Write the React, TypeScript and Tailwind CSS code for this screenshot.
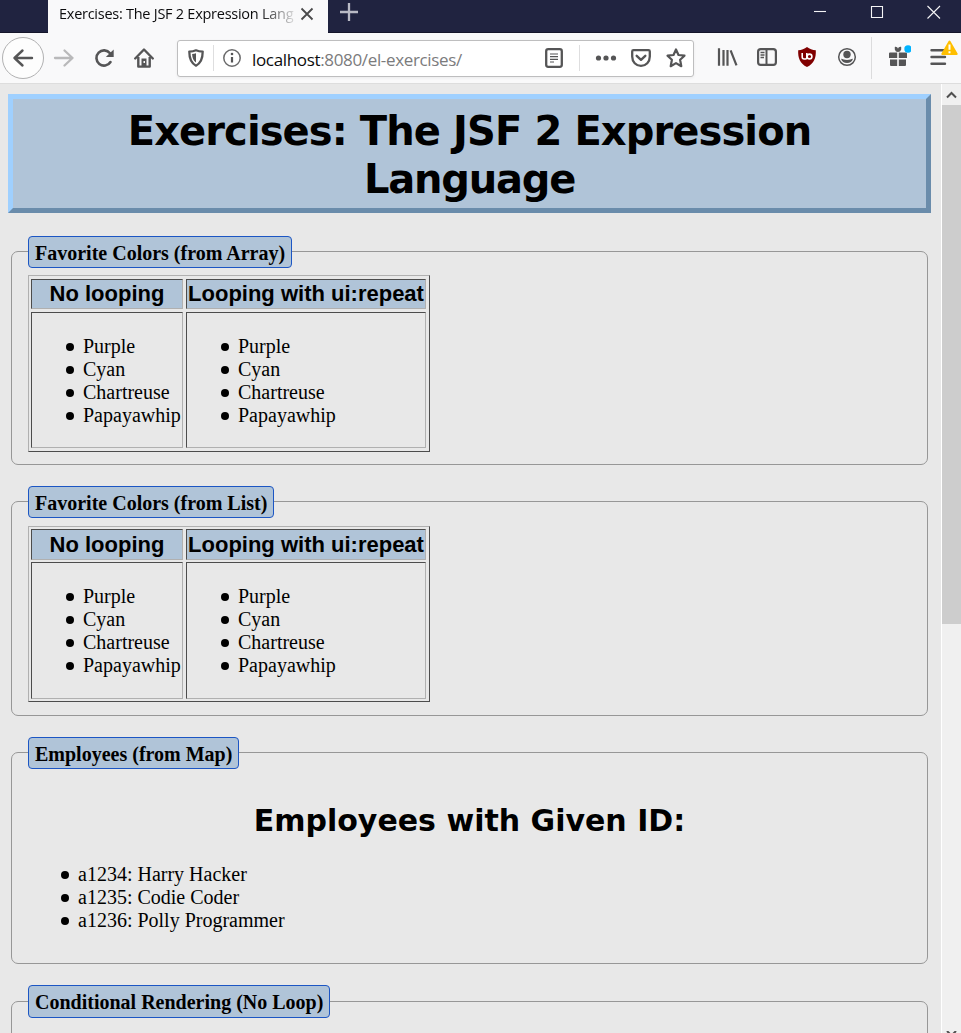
import type { ReactNode } from "react";

function Icon({ children, className = "" }: { children: ReactNode; className?: string }) {
  return (
    <svg width="24" height="24" viewBox="0 0 24 24" fill="none" className={`shrink-0 text-[#555556] ${className}`}>
      {children}
    </svg>
  );
}

function ToolButton({ children }: { children: ReactNode }) {
  return <div className="flex h-10 w-10 shrink-0 items-center justify-center">{children}</div>;
}

function TabStrip() {
  return (
    <div className="flex h-[33px] shrink-0 border-b border-[#14152a] bg-[#202340]">
      <div className="ml-12 flex h-[33px] w-[280px] shrink-0 items-center bg-[#f9f9fa] pb-[5px] pl-[11px]">
        <span className="w-[236px] overflow-hidden whitespace-nowrap bg-linear-to-r from-[#0c0c0d] from-85% to-[#0c0c0d]/10 bg-clip-text font-['Open_Sans',sans-serif] text-[14.5px] leading-5 tracking-[-0.26px] text-transparent">
          Exercises: The JSF 2 Expression Lang
        </span>
        <svg width="14" height="14" viewBox="0 0 14 14" className="ml-[5px]" stroke="#4a4a4b" strokeWidth="1.8" fill="none">
          <path d="M1.500 1.500L12.500 12.500M12.500 1.500L1.500 12.500" />
        </svg>
      </div>
      <svg width="20" height="20" viewBox="0 0 20 20" className="ml-[11px] mt-[2px]" stroke="#b9bac5" strokeWidth="2.300" fill="none">
        <path d="M1 10H19M10 1V19" />
      </svg>
      <div className="flex-1" />
      <svg width="130" height="24" viewBox="0 0 130 24" stroke="#f4f4f6" strokeWidth="1.1" fill="none" className="mr-[18px]">
        <path d="M1 11.500H13" />
        <path d="M58.500 6.500H69.500V17.500H58.500Z" />
        <path d="M114.500 6L127 18.500M127 6L114.500 18.500" />
      </svg>
    </div>
  );
}

function AddressBar() {
  return (
    <div className="flex h-[37px] w-[517px] shrink-0 items-center rounded-[3px] border border-[#bebebf] bg-white shadow-[0_1px_3px_rgba(0,0,0,0.06)]">
      <Icon className="ml-[6px]">
        <path d="M12 4.300C14 5.200 16.500 5.600 18.700 5.600C18.700 12.500 17.500 17 12 19.700C6.500 17 5.300 12.500 5.300 5.600C7.500 5.600 10 5.200 12 4.300Z" stroke="currentColor" strokeWidth="2.300" strokeLinejoin="round" />
        <path d="M12 7.300V16.600C9.300 14.800 8.300 12 8.100 8.100C9.600 8 10.900 7.700 12 7.300Z" fill="currentColor" />
      </Icon>
      <div className="ml-[5px] h-[26px] w-px bg-[#dededf]" />
      <Icon className="ml-[6px]">
        <circle cx="12" cy="12" r="8.200" stroke="#6b6b6c" strokeWidth="1.500" />
        <path d="M12 11V16.500" stroke="currentColor" strokeWidth="2.200" />
        <circle cx="12" cy="8" r="1.300" fill="currentColor" />
      </Icon>
      <div className="ml-[8px] mt-[3px] w-[285px] whitespace-nowrap font-['Open_Sans',sans-serif] text-[17px] leading-6 tracking-[-0.34px] text-[#7b7b7c]">
        <span className="text-[#0c0c0d]">localhost</span>:8080/el-exercises/
      </div>
      <Icon className="ml-[5px]">
        <rect x="4.200" y="3.200" width="15.600" height="17.600" rx="2" stroke="currentColor" strokeWidth="2.300" />
        <path d="M8 8H16M8 10.700H16M8 13.300H16M8 16H12" stroke="currentColor" strokeWidth="1.200" />
      </Icon>
      <div className="ml-[13px] h-[26px] w-px bg-[#dededf]" />
      <Icon className="ml-[14px]">
        <circle cx="4.500" cy="12" r="2.600" fill="currentColor" />
        <circle cx="12" cy="12" r="2.600" fill="currentColor" />
        <circle cx="19.500" cy="12" r="2.600" fill="currentColor" />
      </Icon>
      <Icon className="ml-[11px]">
        <path d="M4.500 4.200H19.500Q20.800 4.200 20.800 5.500V10.500C20.800 16 17 19.800 12 19.800S3.200 16 3.200 10.500V5.500Q3.200 4.200 4.500 4.200Z" stroke="currentColor" strokeWidth="2.300" />
        <path d="M7.700 9.800L12 13.800L16.300 9.800" stroke="currentColor" strokeWidth="2.400" strokeLinecap="round" strokeLinejoin="round" />
      </Icon>
      <Icon className="ml-[11px]">
        <path d="M12 3.500L14.500 9L20.500 9.700L16.100 13.800L17.300 20.200L12 17.100L6.700 20.200L7.900 13.800L3.500 9.700L9.500 9Z" stroke="currentColor" strokeWidth="2.200" strokeLinejoin="round" />
      </Icon>
    </div>
  );
}

function Toolbar() {
  return (
    <div className="flex h-[51px] shrink-0 items-center border-b border-[#dddddd] bg-[#f9f9fa]">
      <div className="ml-[2px] flex h-[42px] w-[42px] shrink-0 items-center justify-center rounded-full border border-[#b1b1b2] bg-[#fdfdfd]">
        <Icon>
          <path d="M21 12H3.500M11.500 4.500L3.500 12L11.500 19.500" stroke="currentColor" strokeWidth="2.400" strokeLinecap="round" strokeLinejoin="round" />
        </Icon>
      </div>
      <ToolButton>
        <Icon>
          <path d="M3 12H20.500M12.500 4.500L20.500 12L12.500 19.500" stroke="#b9b9ba" strokeWidth="2.300" strokeLinecap="round" strokeLinejoin="round" />
        </Icon>
      </ToolButton>
      <ToolButton>
        <Icon>
          <path d="M18.500 16A7.600 7.600 0 1 1 18 7.300" stroke="currentColor" strokeWidth="2.600" strokeLinecap="round" />
          <path d="M21.700 3.500V11H13.800Z" fill="currentColor" />
        </Icon>
      </ToolButton>
      <ToolButton>
        <Icon>
          <path d="M3.200 12.500L12 3.500L20.800 12.500" stroke="currentColor" strokeWidth="2.400" strokeLinecap="round" strokeLinejoin="round" />
          <path d="M6.300 11V20.600H17.700V11" stroke="currentColor" strokeWidth="2.400" strokeLinejoin="round" />
          <path d="M9.500 12.500H14.500V20.500H9.500Z" fill="currentColor" />
          <path d="M11.500 15H13V17H11.500Z" fill="#f9f9fa" />
        </Icon>
      </ToolButton>
      <div className="ml-[13px]">
        <AddressBar />
      </div>
      <div className="ml-[13px] flex">
        <ToolButton>
          <Icon>
            <path d="M4 3.300V20.700M8.500 5V20.700M12.500 5V20.700M15.600 5.300L21.500 20.300" stroke="currentColor" strokeWidth="2.200" />
          </Icon>
        </ToolButton>
        <ToolButton>
          <Icon>
            <rect x="3.100" y="4.100" width="17.800" height="15.800" rx="2.600" stroke="currentColor" strokeWidth="2.200" />
            <path d="M11.500 4V20" stroke="currentColor" strokeWidth="2" />
            <path d="M5.500 7.500H9.500M5.500 10H9.500M5.500 12.500H9" stroke="currentColor" strokeWidth="1.300" />
          </Icon>
        </ToolButton>
        <ToolButton>
          <Icon>
            <path d="M12 2C14.500 4 17.500 5 20.800 5.200C21.200 13 19 18.500 12 22C5 18.500 2.800 13 3.200 5.200C6.500 5 9.500 4 12 2Z" fill="#800000" />
            <path d="M7.200 8V12Q7.200 14 9.200 14H10.600Q11.800 14 11.800 12.500V8" stroke="#fff" strokeWidth="1.600" />
            <circle cx="14.500" cy="11.500" r="2.400" stroke="#fff" strokeWidth="1.600" />
          </Icon>
        </ToolButton>
        <ToolButton>
          <Icon>
            <circle cx="12" cy="12" r="8.300" stroke="currentColor" strokeWidth="1.500" />
            <circle cx="12" cy="9.500" r="3.700" fill="currentColor" />
            <path d="M6 13.800C8 14 9.200 15 12 15S16 14 18 13.800C17 16.800 15 18 12 18S7 16.800 6 13.800Z" fill="currentColor" />
          </Icon>
        </ToolButton>
        <div className="ml-[4px] h-[42px] w-px bg-[#dcdcdd]" />
        <div className="ml-[6px]">
          <ToolButton>
            <svg width="26" height="26" viewBox="0 0 26 26" fill="#555556">
              <path d="M5 8.500H12.200V14H4V9.500Q4 8.500 5 8.500ZM13.800 8.500H21Q22 8.500 22 9.500V14H13.800ZM5 15.500H12.200V22H6Q5 22 5 21ZM13.800 15.500H21V21Q21 22 20 22H13.800Z" />
              <path d="M9.800 3C11 2.500 12.500 3.200 13 4.800C13.500 3.200 15 2.500 16.200 3V5.500Q15.500 8 13 8T9.800 5.500Z" />
              <circle cx="23" cy="5" r="3.700" fill="#00b3ff" />
            </svg>
          </ToolButton>
        </div>
        <div className="relative">
          <ToolButton>
            <Icon>
              <path d="M5.500 5.200H19M5.500 12H19M5.500 18.800H19" stroke="currentColor" strokeWidth="2.400" strokeLinecap="round" />
            </Icon>
          </ToolButton>
          <svg width="17" height="16" viewBox="0 0 17 16" className="absolute left-[23px] top-[3px]">
            <path d="M8.500 1.500L15.700 14H1.300Z" fill="#ffbf00" stroke="#ffbf00" strokeWidth="2" strokeLinejoin="round" />
            <path d="M8.500 4.500V9.700M8.500 11.300V13.300" stroke="#fff" strokeWidth="2" />
          </svg>
        </div>
      </div>
    </div>
  );
}

function Section({
  title,
  children,
  className = "",
  legendHeight = "h-[31.5px]",
}: {
  title: string;
  children?: ReactNode;
  className?: string;
  legendHeight?: string;
}) {
  return (
    <fieldset className={`ml-[3px] w-[917px] rounded-[7px] border border-[#979797] px-4 ${className}`}>
      <legend className={`rounded-[4px] border border-[#1c56c4] bg-[#b0c4d8] px-[6px] pt-[4px] text-[20px] font-bold leading-[24px] ${legendHeight}`}>
        {title}
      </legend>
      {children}
    </fieldset>
  );
}

const cell = "border border-t-[#4c4c4c] border-l-[#4c4c4c] border-r-[#b0b0b0] border-b-[#b0b0b0]";
const colors = ["Purple", "Cyan", "Chartreuse", "Papayawhip"];

function Bullet({ children }: { children: ReactNode }) {
  return (
    <li className="flex items-center before:mr-[9px] before:size-[8px] before:rounded-full before:bg-black before:content-['']">
      {children}
    </li>
  );
}

function ColorList() {
  return (
    <ul className={`${cell} pl-[34px] pt-[22px]`}>
      {colors.map((c) => (
        <Bullet key={c}>{c}</Bullet>
      ))}
    </ul>
  );
}

function HeaderCell({ children }: { children: ReactNode }) {
  return (
    <div className={`${cell} flex items-center justify-center whitespace-nowrap bg-[#b0c4d8] font-['Liberation_Sans',Arial,sans-serif] text-[22px] font-bold leading-[28px]`}>
      {children}
    </div>
  );
}

function ColorTable({ className }: { className: string }) {
  return (
    <div className={`grid w-[402px] grid-cols-[152px_240px] gap-x-[3px] border border-t-[#b0b0b0] border-l-[#b0b0b0] border-r-[#4c4c4c] border-b-[#4c4c4c] pl-[2px] ${className}`}>
      <HeaderCell>No looping</HeaderCell>
      <HeaderCell>Looping with ui:repeat</HeaderCell>
      <ColorList />
      <ColorList />
    </div>
  );
}

function Scrollbar() {
  return (
    <div className="flex w-5 shrink-0 flex-col border-l border-white bg-[#f0f0f0]">
      <div className="flex h-[21px] items-center justify-center">
        <svg width="11" height="8" viewBox="0 0 11 8" fill="none" stroke="#505050" strokeWidth="2">
          <path d="M1 6.500L5.500 2L10 6.500" />
        </svg>
      </div>
      <div className="h-[519px] bg-[#cdcdcd]" />
      <div className="flex-1" />
      <svg width="11" height="2" viewBox="0 0 11 2" fill="none" stroke="#505050" strokeWidth="2" className="ml-[4px]">
        <path d="M1 0L5.500 4.500L10 0" />
      </svg>
    </div>
  );
}

export default function App() {
  return (
    <div className="flex h-[1033px] w-[961px] flex-col overflow-hidden bg-[#e8e8e8]">
      <TabStrip />
      <Toolbar />
      <div className="flex min-h-0 flex-1">
        <main className="w-[941px] overflow-hidden pl-2 pt-[10px] font-['Liberation_Serif','Times_New_Roman',serif] text-[20px] leading-[23px] text-black">
          <h1 className="h-[119px] w-[923px] border-[5px] border-t-[#9fd0ff] border-l-[#9fd0ff] border-r-[#6a8cab] border-b-[#6a8cab] bg-[#b0c4d8] pt-[8px] text-center font-['DejaVu_Sans',Verdana,sans-serif] text-[40px] font-bold leading-[48px] tracking-[-0.9px]">
            Exercises: The JSF 2 Expression
            <br />
            <span className="tracking-[-1.2px]">Language</span>
          </h1>
          <Section title="Favorite Colors (from Array)" className="mt-[23px] h-[229px]">
            <ColorTable className="mt-[7.5px] h-[177px] grid-rows-[30px_136px] gap-y-[3px] pt-[3px]" />
          </Section>
          <Section title="Favorite Colors (from List)" className="mt-[21px] h-[230px]">
            <ColorTable className="mt-[8.5px] h-[176px] grid-rows-[31px_137px] gap-y-[2px] pt-[2px]" />
          </Section>
          <Section title="Employees (from Map)" className="mt-[21px] h-[227px]">
            <h2 className="mt-[33.5px] text-center font-['DejaVu_Sans',Verdana,sans-serif] text-[30px] font-bold leading-[38px]">
              Employees with Given ID:
            </h2>
            <ul className="mt-[23px] pl-[33px]">
              <Bullet>a1234: Harry Hacker</Bullet>
              <Bullet>a1235: Codie Coder</Bullet>
              <Bullet>a1236: Polly Programmer</Bullet>
            </ul>
          </Section>
          <Section title="Conditional Rendering (No Loop)" legendHeight="h-[33px]" className="mt-[21px] h-[227px]" />
        </main>
        <Scrollbar />
      </div>
    </div>
  );
}
